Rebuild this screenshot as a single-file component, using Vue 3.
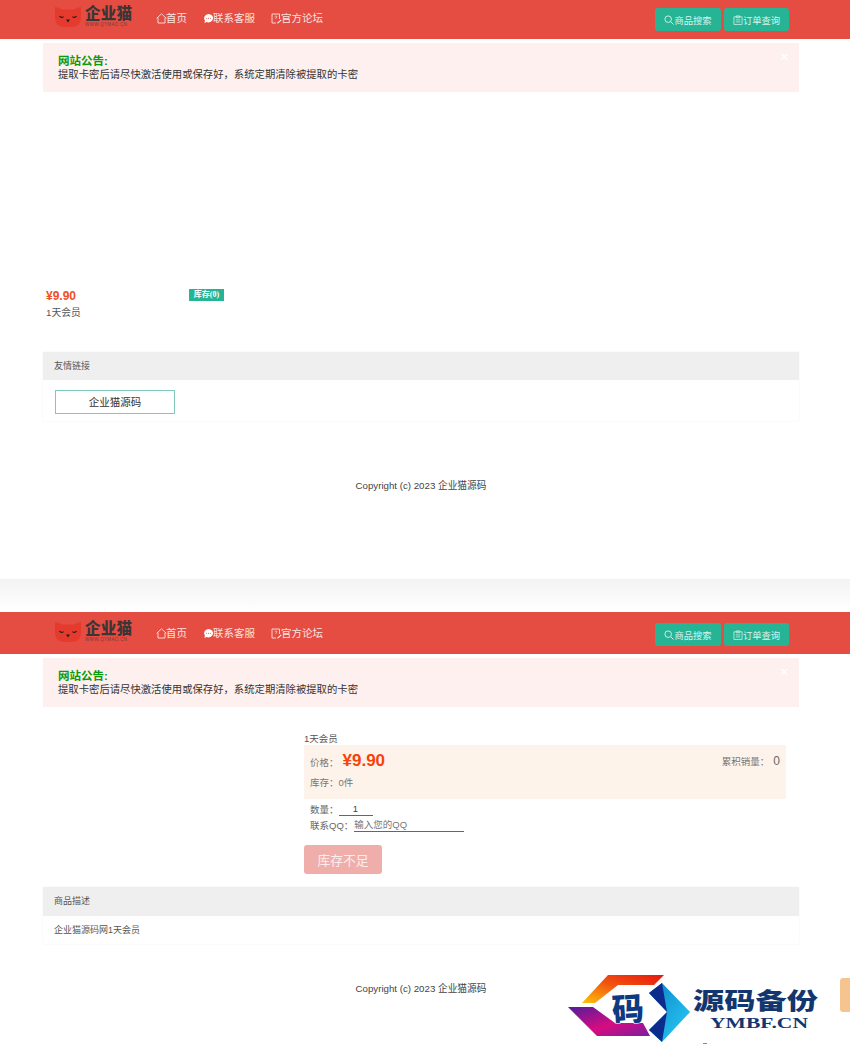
<script setup>
const nav = [
  { key: 'home', label: '首页' },
  { key: 'chat', label: '联系客服' },
  { key: 'forum', label: '官方论坛' }
]
</script>

<template>
  <div class="page">
    <section class="screen first">
      <header class="top cropped">
        <div class="brand">
          <svg class="cat" viewBox="0 0 28 22" width="28" height="22">
            <path d="M1 1 Q5 1 8 3.5 H20 Q23 1 27 1 V12 Q27 21 17 21 H11 Q1 21 1 12 Z" fill="#e53b2e" />
            <path d="M5.5 10 Q7.5 12.6 9.5 10.6 M18.5 10.6 Q20.5 12.6 22.5 10" stroke="#2b1a1a" stroke-width="1.2" fill="none" />
            <path d="M12 13.6 H16 L14 16.4 Z" fill="#2b1a1a" />
          </svg>
          <div class="brand-text">
            <strong>企业猫</strong>
            <small>WWW.QYMAO.CN</small>
          </div>
        </div>
        <nav class="nav">
          <a v-for="item in nav" :key="item.key" class="nav-item">
            <svg v-if="item.key === 'home'" viewBox="0 0 11 11" width="11" height="11"><path d="M.6 5.4 L5.5 .8 L10.4 5.4 M2 4.6 V10 H9 V4.6" fill="none" stroke="#fbe3e0" stroke-width=".9" /></svg>
            <svg v-else-if="item.key === 'chat'" viewBox="0 0 11 11" width="11" height="11"><path d="M5.5 1 A4.5 4.2 0 1 1 3.6 9 L1.4 10 L2 7.6 A4.5 4.2 0 0 1 5.5 1 Z" fill="#fff" /><circle cx="3.6" cy="5.2" r=".55" fill="#e54d42" /><circle cx="5.5" cy="5.2" r=".55" fill="#e54d42" /><circle cx="7.4" cy="5.2" r=".55" fill="#e54d42" /></svg>
            <svg v-else viewBox="0 0 11 11" width="11" height="11"><path d="M8.5 6 V1 H1 V10 H5" fill="none" stroke="#fbe3e0" stroke-width=".9" /><path d="M6 10 L10 6.4 L10.6 7.2 L7 10.4 Z" fill="#fff" /><path d="M3.6 3.8 Q4.8 2.2 6 3.6 Q6 4.6 4.8 5.2 V6" fill="none" stroke="#fbe3e0" stroke-width=".7" /></svg>
            {{ item.label }}
          </a>
        </nav>
        <div class="actions">
          <button class="action wide">
            <svg viewBox="0 0 11 11" width="10" height="10"><circle cx="4.6" cy="4.6" r="3.6" fill="none" stroke="#d8f2ec" stroke-width="1" /><path d="M7.3 7.3 L10.4 10.4" stroke="#d8f2ec" stroke-width="1.1" /></svg>商品搜索
          </button>
          <button class="action">
            <svg viewBox="0 0 11 11" width="10" height="10"><path d="M1 2 H10 V10.4 H1 Z M3.5 1 H7.5 V3 H3.5 Z M3 5.4 H8 M3 7.6 H8" fill="none" stroke="#d8f2ec" stroke-width=".8" /></svg>订单查询
          </button>
        </div>
      </header>

      <div class="notice">
        <span class="close">×</span>
        <b>网站公告:</b>
        <p>提取卡密后请尽快激活使用或保存好，系统定期清除被提取的卡密</p>
      </div>

      <div class="product">
        <div class="product-row">
          <span class="small-price">¥9.90</span>
          <span class="stock-tag">库存(0)</span>
        </div>
        <div class="product-name">1天会员</div>
      </div>

      <div class="card links">
        <div class="card-head link-head">友情链接</div>
        <div class="card-body link-body"><a class="link-box">企业猫源码</a></div>
      </div>

      <footer class="copy copy-a">Copyright (c) 2023 企业猫源码</footer>
    </section>

    <div class="divider"></div>

    <section class="screen second">
      <header class="top full">
        <div class="brand">
          <svg class="cat" viewBox="0 0 28 22" width="28" height="22">
            <path d="M1 1 Q5 1 8 3.5 H20 Q23 1 27 1 V12 Q27 21 17 21 H11 Q1 21 1 12 Z" fill="#e53b2e" />
            <path d="M5.5 10 Q7.5 12.6 9.5 10.6 M18.5 10.6 Q20.5 12.6 22.5 10" stroke="#2b1a1a" stroke-width="1.2" fill="none" />
            <path d="M12 13.6 H16 L14 16.4 Z" fill="#2b1a1a" />
          </svg>
          <div class="brand-text">
            <strong>企业猫</strong>
            <small>WWW.QYMAO.CN</small>
          </div>
        </div>
        <nav class="nav">
          <a v-for="item in nav" :key="item.key" class="nav-item">
            <svg v-if="item.key === 'home'" viewBox="0 0 11 11" width="11" height="11"><path d="M.6 5.4 L5.5 .8 L10.4 5.4 M2 4.6 V10 H9 V4.6" fill="none" stroke="#fbe3e0" stroke-width=".9" /></svg>
            <svg v-else-if="item.key === 'chat'" viewBox="0 0 11 11" width="11" height="11"><path d="M5.5 1 A4.5 4.2 0 1 1 3.6 9 L1.4 10 L2 7.6 A4.5 4.2 0 0 1 5.5 1 Z" fill="#fff" /><circle cx="3.6" cy="5.2" r=".55" fill="#e54d42" /><circle cx="5.5" cy="5.2" r=".55" fill="#e54d42" /><circle cx="7.4" cy="5.2" r=".55" fill="#e54d42" /></svg>
            <svg v-else viewBox="0 0 11 11" width="11" height="11"><path d="M8.5 6 V1 H1 V10 H5" fill="none" stroke="#fbe3e0" stroke-width=".9" /><path d="M6 10 L10 6.4 L10.6 7.2 L7 10.4 Z" fill="#fff" /><path d="M3.6 3.8 Q4.8 2.2 6 3.6 Q6 4.6 4.8 5.2 V6" fill="none" stroke="#fbe3e0" stroke-width=".7" /></svg>
            {{ item.label }}
          </a>
        </nav>
        <div class="actions">
          <button class="action wide">
            <svg viewBox="0 0 11 11" width="10" height="10"><circle cx="4.6" cy="4.6" r="3.6" fill="none" stroke="#d8f2ec" stroke-width="1" /><path d="M7.3 7.3 L10.4 10.4" stroke="#d8f2ec" stroke-width="1.1" /></svg>商品搜索
          </button>
          <button class="action">
            <svg viewBox="0 0 11 11" width="10" height="10"><path d="M1 2 H10 V10.4 H1 Z M3.5 1 H7.5 V3 H3.5 Z M3 5.4 H8 M3 7.6 H8" fill="none" stroke="#d8f2ec" stroke-width=".8" /></svg>订单查询
          </button>
        </div>
      </header>

      <div class="notice">
        <span class="close">×</span>
        <b>网站公告:</b>
        <p>提取卡密后请尽快激活使用或保存好，系统定期清除被提取的卡密</p>
      </div>

      <div class="detail">
        <div class="detail-title">1天会员</div>
        <div class="panel">
          <div class="panel-row">
            <div class="price-line"><span class="label">价格：</span><span class="big-price">¥9.90</span></div>
            <div class="sold"><span class="label">累积销量：</span><span class="sold-num">0</span></div>
          </div>
          <div class="stock-line">库存：0件</div>
        </div>
        <div class="field qty"><span>数量：</span><span class="qty-input">1</span></div>
        <div class="field qq"><span>联系QQ：</span><span class="qq-input">输入您的QQ</span></div>
        <button class="soldout">库存不足</button>
      </div>

      <div class="card desc">
        <div class="card-head">商品描述</div>
        <div class="card-body desc-body">企业猫源码网1天会员</div>
      </div>

      <footer class="copy copy-b">Copyright (c) 2023 企业猫源码</footer>
    </section>

    <svg class="watermark" viewBox="0 0 300 93" width="300" height="93">
      <defs>
        <linearGradient id="wmA" x1="0" y1="1" x2="1" y2="0"><stop offset="0" stop-color="#fcc20c" /><stop offset=".5" stop-color="#f2540f" /><stop offset="1" stop-color="#e5170f" /></linearGradient>
        <linearGradient id="wmB" x1="0" y1="0" x2="1" y2="1"><stop offset="0" stop-color="#4f1d9c" /><stop offset=".55" stop-color="#d70c80" /><stop offset="1" stop-color="#7a1ea0" /></linearGradient>
        <linearGradient id="wmC" x1="0" y1="0" x2="1" y2="1"><stop offset="0" stop-color="#0b82c6" /><stop offset="1" stop-color="#2ad0f8" /></linearGradient>
      </defs>
      <path d="M32 43 L58 15 H114 L104 25 H68 L45 43 Z" fill="url(#wmA)" />
      <path d="M18 47 H43 L65 63 H93 L100 76 H47 Z" fill="url(#wmB)" />
      <path d="M112 23 L140 52 L112 82 L99 70 L117 52 L99 33 Z" fill="url(#wmC)" />
      <path d="M112 23 L117 52 L99 33 Z M117 52 L112 82 L99 70 Z" fill="#0d2b8c" />
      <ellipse cx="80" cy="49" rx="20" ry="13" fill="#fff" />
      <text x="62" y="61" class="wm-ma" transform="rotate(-4 78 52)">码</text>
      <text x="143" y="49" class="wm-cn" textLength="125" lengthAdjust="spacingAndGlyphs">源码备份</text>
      <text x="160" y="68" class="wm-en" textLength="98" lengthAdjust="spacingAndGlyphs">YMBF.CN</text>
    </svg>
    <div class="side-tab"></div>
    <div class="tick"></div>
  </div>
</template>

<style>
html, body { margin: 0; background: #fff; }
</style>

<style scoped>
.page {
  position: relative;
  width: 850px;
  height: 1053px;
  overflow: hidden;
  background: #fff;
  font-family: "Liberation Sans", "Noto Sans CJK SC", sans-serif;
  font-size: 10.5px;
  color: #555;
}
.screen { display: flex; flex-direction: column; }
.first { height: 579px; }
.divider { height: 33px; background: linear-gradient(#f3f3f3, #fff); }

.top {
  display: flex;
  align-items: center;
  background: #e54d42;
  padding-left: 54px;
  padding-right: 61px;
  box-sizing: border-box;
}
.cropped { height: 39px; }
.full { height: 42px; padding-top: 3px; }

.brand { display: flex; align-items: center; gap: 3px; width: 102px; margin-top: -6px; }
.cat { flex: none; }
.brand-text { display: flex; flex-direction: column; }
.brand-text strong { font-size: 15.5px; line-height: 16px; font-weight: 900; color: #3d3535; letter-spacing: .2px; }
.brand-text small { font-size: 4.5px; line-height: 5px; color: #7a3a36; letter-spacing: .35px; }

.nav { display: flex; gap: 16px; margin-top: -3px; }
.nav-item { display: flex; align-items: center; color: #fbe3e0; font-size: 10.5px; line-height: 14px; }
.nav-item svg { flex: none; margin-right: -1px; }

.actions { display: flex; gap: 3px; margin-left: auto; }
.action {
  display: flex;
  align-items: center;
  justify-content: center;
  width: 65px;
  height: 23px;
  padding: 0;
  border: 0;
  border-radius: 3px;
  background: #27b495;
  color: #d8f2ec;
  font: inherit;
  font-size: 9.3px;
}
.action.wide { width: 66px; }

.notice {
  position: relative;
  box-sizing: border-box;
  height: 49px;
  margin: 4px 51px 0 43px;
  padding: 11px 15px 0;
  background: #fdf0ef;
  color: #333;
}
.notice b { display: block; font-size: 11.5px; line-height: 14px; color: #0a9a0a; }
.notice p { margin: 0; font-size: 10.35px; line-height: 13px; color: #333; }
.close { position: absolute; top: 7px; right: 11px; color: #fff; font-size: 13px; line-height: 14px; font-weight: bold; }

.product { margin: 197px 0 0 46px; height: 60px; }
.product-row { display: flex; align-items: flex-start; height: 15px; }
.small-price { width: 143px; font-size: 12px; font-weight: bold; line-height: 14px; color: #f0501e; }
.stock-tag {
  box-sizing: border-box;
  width: 35px;
  height: 12px;
  background: #27b495;
  color: #fff;
  font-family: "Liberation Serif", "Noto Sans CJK SC", serif;
  font-size: 8px;
  font-weight: bold;
  line-height: 12px;
  text-align: center;
}
.product-name { margin-top: 2px; font-size: 9.75px; line-height: 14px; color: #555; }

.card {
  margin: 0 51px 0 43px;
  background: #fff;
  box-shadow: 0 0 2px rgba(0, 0, 0, .07);
  border-radius: 1px;
}
.card-head {
  height: 29px;
  padding-left: 11px;
  background: #efefef;
  font-size: 9px;
  line-height: 29px;
  color: #555;
}
.link-head { height: 28px; line-height: 28px; }
.link-body { height: 41px; padding: 10px 0 0 12px; box-sizing: border-box; }
.link-box {
  display: block;
  box-sizing: border-box;
  width: 120px;
  height: 24px;
  border: 1px solid #7fcabd;
  font-size: 10.5px;
  line-height: 22px;
  text-align: center;
  color: #333;
}
.links { margin-top: 3px; }

.copy { text-align: center; padding-right: 8px; font-size: 9.7px; line-height: 14px; color: #444; }
.copy-a { margin-top: 58px; }
.copy-b { margin-top: 38px; }

.detail { margin: 25px 64px 0 304px; }
.detail-title { font-size: 9.5px; line-height: 13px; color: #555; height: 13px; }
.panel { box-sizing: border-box; height: 54px; background: #fdf3ea; padding: 5px 6px 0; color: #777; }
.panel-row { display: flex; justify-content: space-between; align-items: center; height: 22px; }
.price-line { display: flex; align-items: baseline; }
.label { font-size: 9.5px; color: #777; }
.big-price { font-size: 17px; line-height: 22px; font-weight: bold; color: #f8420a; margin-left: 4px; }
.sold { display: flex; align-items: center; margin-top: -1px; }
.sold-num { font-size: 12px; margin-left: 4px; color: #666; }
.stock-line { margin-top: 4px; font-size: 9.5px; line-height: 13px; }
.field { display: flex; align-items: flex-end; margin-left: 6px; font-size: 9.5px; color: #666; line-height: 13px; }
.qty { margin-top: 4px; height: 13px; }
.qty-input { width: 34px; border-bottom: 1px solid #666; text-align: center; color: #444; box-sizing: border-box; }
.qq { margin-top: 3px; height: 13px; }
.qq-input { width: 110px; margin-left: 1px; border-bottom: 1px solid #666; color: #777; box-sizing: border-box; }
.soldout {
  display: block;
  width: 78px;
  height: 29px;
  margin-top: 13px;
  padding: 0;
  border: 0;
  border-radius: 3px;
  background: #f0aeab;
  color: #fbeeee;
  font-family: "Liberation Serif", "Noto Sans CJK SC", serif;
  font-size: 12.75px;
}
.desc { margin-top: 13px; }
.desc-body { height: 28px; padding-left: 11px; font-size: 9px; line-height: 28px; color: #555; }

.watermark { position: absolute; left: 550px; top: 960px; }
.wm-ma { font-family: "Liberation Serif", "Noto Sans CJK SC", serif; font-size: 32px; font-weight: 900; fill: #0d3a80; stroke: #fff; stroke-width: 1px; paint-order: stroke; }
.wm-cn { font-family: "Liberation Serif", "Noto Sans CJK SC", serif; font-size: 23px; font-weight: 900; fill: #14366f; }
.wm-en { font-family: "Liberation Serif", serif; font-size: 15px; font-weight: bold; fill: #14366f; }
.side-tab { position: absolute; left: 840px; top: 978px; width: 10px; height: 34px; background: #f6c48e; border-radius: 3px 0 0 3px; }
.tick { position: absolute; left: 703px; top: 1043px; width: 4px; height: 1px; background: #888; }
</style>
